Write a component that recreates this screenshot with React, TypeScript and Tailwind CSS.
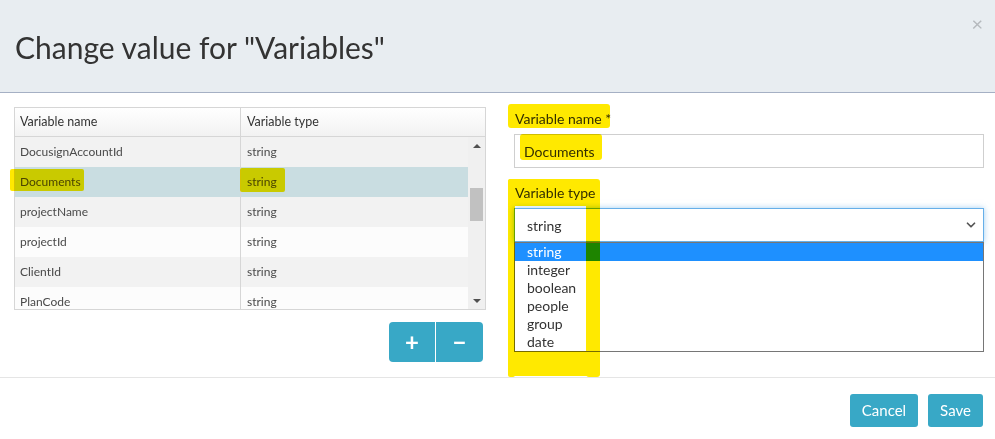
import { ChevronDown } from 'lucide-react';

const rows = [
  { name: 'DocusignAccountId', type: 'string', bg: 'bg-[#f2f2f2]' },
  { name: 'Documents', type: 'string', bg: 'bg-[#c9dde1]' },
  { name: 'projectName', type: 'string', bg: 'bg-[#f2f2f2]' },
  { name: 'projectId', type: 'string', bg: 'bg-[#fcfcfc]' },
  { name: 'ClientId', type: 'string', bg: 'bg-[#f2f2f2]' },
  { name: 'PlanCode', type: 'string', bg: 'bg-[#fcfcfc]' },
];

const options = ['string', 'integer', 'boolean', 'people', 'group', 'date'];

const VariablesTable = () => (
  <div className="h-[203px] border border-[#d6d6d6] flex flex-col overflow-hidden text-[12px] text-[#4a4a4a]">
    <div className="h-[29px] shrink-0 flex border-b border-[#d6d6d6] bg-gradient-to-b from-white to-[#f2f2f2] text-[#333] text-[12.5px]">
      <div className="w-[226px] border-r border-[#d6d6d6] px-[5px] flex items-center">Variable name</div>
      <div className="flex-1 px-[6px] flex items-center">Variable type</div>
    </div>
    <div className="flex flex-1 overflow-hidden">
      <div className="flex-1 flex flex-col">
        {rows.map((row) => (
          <div key={row.name} className={`h-[30px] shrink-0 flex ${row.bg}`}>
            <div className="w-[226px] border-r border-[#d6d6d6] px-[5px] flex items-center">{row.name}</div>
            <div className="flex-1 px-[6px] flex items-center">{row.type}</div>
          </div>
        ))}
      </div>
      <div className="w-[17px] bg-[#f0f0f0] flex flex-col items-center">
        <div className="h-[17px] flex items-center justify-center">
          <div className="w-0 h-0 border-l-[4px] border-r-[4px] border-b-[4px] border-l-transparent border-r-transparent border-b-[#505050]" />
        </div>
        <div className="mt-[34px] w-[13px] h-[33px] bg-[#c1c1c1]" />
        <div className="flex-1" />
        <div className="h-[17px] flex items-center justify-center">
          <div className="w-0 h-0 border-l-[4px] border-r-[4px] border-t-[4px] border-l-transparent border-r-transparent border-t-[#505050]" />
        </div>
      </div>
    </div>
  </div>
);

export default function App() {
  return (
    <div className="relative w-[995px] h-[439px] overflow-hidden bg-white font-['Lato',sans-serif] text-[#333]">
      <div className="relative h-[93px] bg-[#e8edf1] border-b border-[#a5b0c4] px-[15px] pt-[29px]">
        <h1 className="text-[30px] leading-[36px] text-[#333]">Change value for "Variables"</h1>
        <button className="absolute right-[12px] top-[13px] text-[#b5b9bd] text-[20px] leading-none">×</button>
      </div>

      <div className="h-[284px] flex gap-[28px] px-[14px] pt-[14px]">
        <div className="w-[472px] shrink-0 flex flex-col">
          <VariablesTable />
          <div className="flex justify-end pr-[3px] mt-[12px]">
            <div className="flex rounded-[4px] overflow-hidden bg-[#38a8c6] text-white">
              <button className="w-[47px] h-[40px] flex items-center justify-center text-[24px] font-bold leading-none border-r border-white">+</button>
              <button className="w-[47px] h-[40px] flex items-center justify-center text-[24px] font-bold leading-none">−</button>
            </div>
          </div>
        </div>

        <div className="w-[470px] shrink-0 flex flex-col text-[14px]">
          <label className="h-[20px] mt-[1px] pl-[1px] flex items-center">Variable name *</label>
          <div className="mt-[6px] h-[34px] border border-[#cfcfcf] pl-[9px] flex items-center">Documents</div>
          <label className="h-[20px] mt-[14px] pl-[1px] flex items-center">Variable type</label>
          <div className="relative mt-[6px]">
            <div className="h-[34px] border border-[#66afe9] shadow-[0_0_6px_rgba(102,175,233,0.6)] pl-[12px] pr-[5px] flex items-center justify-between bg-white">
              <span>string</span>
              <ChevronDown size={14} strokeWidth={3} className="text-[#555]" />
            </div>
            <div className="absolute left-0 right-0 top-[34px] border border-[#767676] bg-white">
              {options.map((o, i) => (
                <div
                  key={o}
                  className={`h-[18px] leading-[18px] pl-[12px] ${i === 0 ? 'bg-[#1e90ff] text-white' : 'text-[#333]'}`}
                >
                  {o}
                </div>
              ))}
            </div>
          </div>
        </div>
      </div>

      <div className="h-[62px] border-t border-[#e5e5e5] flex justify-end items-start gap-[10px] pt-[16px] pr-[12px]">
        <button className="h-[33px] w-[68px] rounded-[3px] bg-[#38a8c6] text-white text-[15px]">Cancel</button>
        <button className="h-[33px] w-[55px] rounded-[3px] bg-[#38a8c6] text-white text-[15px]">Save</button>
      </div>

      {/* marker highlights drawn over the screenshot */}
      <div className="pointer-events-none absolute inset-0 mix-blend-multiply">
        <div className="absolute left-[10px] top-[169px] w-[74px] h-[22px] bg-[#ffe900] rounded-[2px]" />
        <div className="absolute left-[240px] top-[168px] w-[45px] h-[24px] bg-[#ffe900] rounded-[2px]" />
        <div className="absolute left-[508px] top-[104px] w-[102px] h-[24px] bg-[#ffe900] rounded-[3px]" />
        <div className="absolute left-[520px] top-[134px] w-[82px] h-[26px] bg-[#ffe900] rounded-[3px]" />
        <div className="absolute left-[508px] top-[179px] w-[90px] h-[27px] bg-[#ffe900] rounded-[3px]" />
        <div className="absolute left-[508px] top-[179px] w-[7px] h-[198px] bg-[#ffe900] rounded-[2px]" />
        <div className="absolute left-[586px] top-[179px] w-[14px] h-[198px] bg-[#ffe900] rounded-[3px]" />
        <div className="absolute left-[508px] top-[351px] w-[92px] h-[25px] bg-[#ffe900] rounded-[3px]" />
      </div>
    </div>
  );
}
